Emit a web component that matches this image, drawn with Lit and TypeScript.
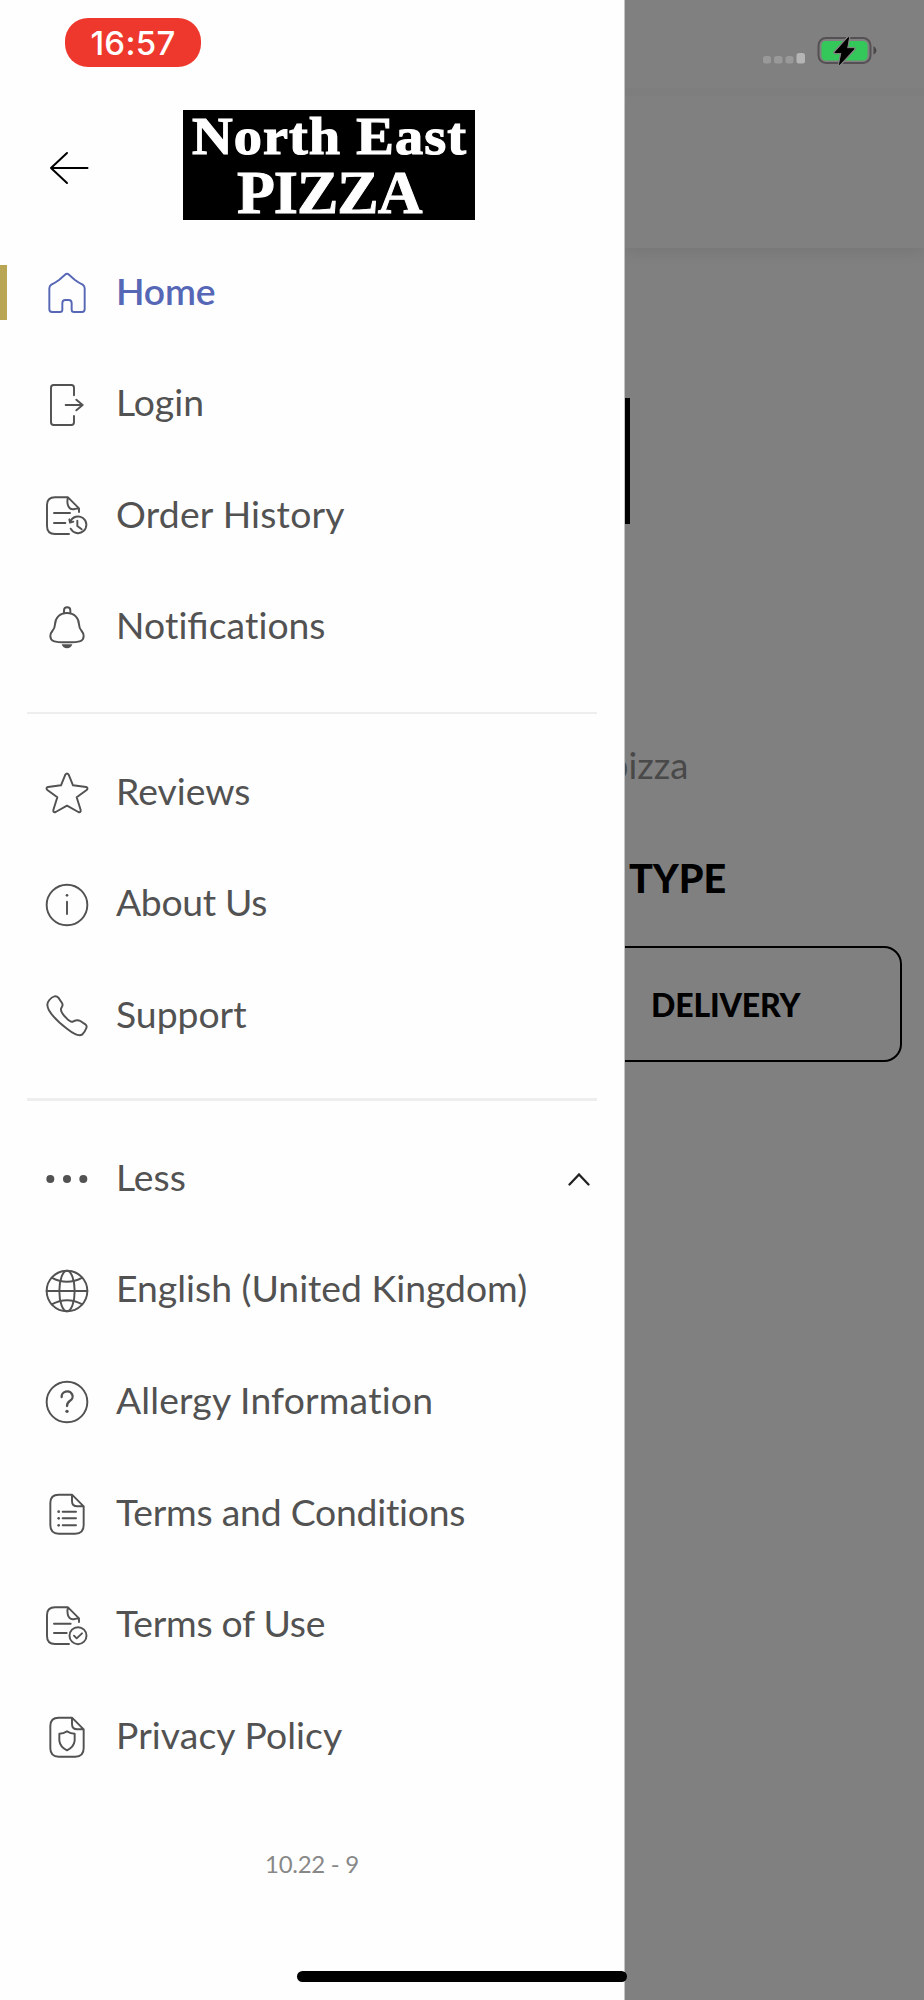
import { LitElement, html, css, svg, nothing } from "lit";
import { customElement, property } from "lit/decorators.js";

const foldedPage = svg`
  <path d="M78 5H38Q13 5 13 30V97Q13 122 38 122H88Q113 122 113 97V40L78 5V24Q78 40 94 40H113"/>`;
const cutPage = svg`
  <path d="M69 117H27Q3 117 3 93V30Q3 7 27 7H66L99 40V51M66 7C62 20 64 42 80 43C88 43 92 38 99 42"/>`;

const icons: Record<string, unknown> = {
  home: svg`<path d="M18 120H42Q49 120 49 113V94Q49 84 58 84H68Q77 84 77 94V113Q77 120 84 120H108Q116 120 116 112V49Q116 42 110 38Q98 32 86 23L69 8Q63 3 57 8L40 23Q28 32 16 38Q10 42 10 49V112Q10 120 18 120Z"/>`,
  login: svg`<path d="M84 34V11Q84 3 76 3H23Q15 3 15 11V115Q15 123 23 123H76Q84 123 84 115V96M59 63H110M91 47L110 63L91 79"/>`,
  history: svg`${cutPage}<path d="M24 54H72M24 84H58"/><path d="M73 80A25 25 0 1 1 74 101"/><path d="M70 73L72 83L82 80" /><path d="M94 77V93L107 103"/>`,
  bell: svg`<path d="M54 19V10Q54 1 63.500 1Q73 1 73 10V19"/><path d="M63 18C40 18 28 34 27 52C26 74 13 70 13 87C13 102 22 106 63 106C104 106 113 102 113 87C113 70 100 74 99 52C98 34 86 18 63 18Z"/><path class="solid" d="M47 112H79Q75 124 63 124Q51 124 47 112Z"/>`,
  star: svg`<path d="M58 8Q63 1 68 8L81 40L120 45Q128 48 122 54L92 76L104 114Q105 123 97 120L63 101L29 120Q21 123 22 114L34 76L4 54Q-2 48 6 45L45 40Z"/>`,
  info: svg`<circle cx="63" cy="63" r="61"/><path d="M63 53V90"/><circle class="solid" cx="63" cy="34" r="4"/>`,
  phone: svg`<path d="M25 4Q32 2 37 8L48 24Q52 30 47 37C40 46 50 58 60 68C68 77 76 83 82 79Q94 73 103 78L118 88Q124 93 121 99C118 108 115 113 108 119C98 125 82 116 64 102C40 84 18 62 8 44C2 30 3 24 10 15Q17 6 25 4Z"/>`,
  dots: svg`<g class="solid"><circle cx="13" cy="63" r="12"/><circle cx="63" cy="63" r="12"/><circle cx="112" cy="63" r="12"/></g>`,
  globe: svg`<circle cx="63" cy="63" r="61"/><ellipse cx="63" cy="63" rx="23" ry="61"/><path d="M2 63H124M17 23Q63 48 109 23M17 103Q63 78 109 103"/>`,
  help: svg`<circle cx="63" cy="63" r="61"/><path class="bold" d="M47 48A16.500 15 0 1 1 72 59Q63 65 63 75"/><circle class="solid" cx="63" cy="91" r="5"/>`,
  terms: svg`${foldedPage}<path d="M50 56H90M50 76H90M50 97H90"/><g class="solid"><circle cx="38" cy="56" r="4"/><circle cx="38" cy="76" r="4"/><circle cx="38" cy="97" r="4"/></g>`,
  usage: svg`${cutPage}<path d="M24 56H74M24 84H62"/><circle cx="96" cy="92" r="25.500"/><path d="M84 92L92 100L108 85"/>`,
  privacy: svg`${foldedPage}<path d="M63 46Q74 53 86 53V74Q84 93 63 103Q42 93 40 74V53Q52 53 63 46Z"/>`,
};

@customElement("menu-row")
class MenuRow extends LitElement {
  @property() icon = "";
  @property() label = "";
  @property({ type: Number }) tracking = 0;
  @property({ type: Boolean, reflect: true }) active = false;
  @property({ type: Boolean }) expanded = false;

  static styles = css`
    :host {
      display: grid;
      grid-template-columns: 46px 42px 1fr auto;
      align-items: center;
      height: 111.65px;
      color: #525252;
    }
    :host([active]) { color: #5667b6; }
    .marker { width: 7px; height: 55px; background: #b9a655; margin-top: -1px; }
    .icon {
      grid-column: 2;
      width: 42px;
      height: 42px;
      overflow: visible;
      fill: none;
      stroke: currentColor;
      stroke-width: 5.8;
      stroke-linecap: round;
      stroke-linejoin: round;
    }
    .solid { fill: currentColor; stroke: none; }
    .bold { stroke-width: 7; }
    .label {
      grid-column: 3;
      padding: 0 0 6px 28px;
      font: 400 37.3px/45px Lato, sans-serif;
      white-space: nowrap;
    }
    .plain { font-variant-ligatures: none; }
    :host([active]) .label { font-weight: 600; }
    .chevron { width: 22px; height: 13px; margin-right: 34px; fill: none; stroke: #222; stroke-width: 2.3; stroke-linecap: round; }
  `;

  render() {
    return html`
      ${this.active ? html`<span class="marker"></span>` : nothing}
      <svg class="icon" viewBox="0 0 126 126">${icons[this.icon]}</svg>
      <span class="label" style=${this.tracking ? `letter-spacing:${this.tracking}px` : nothing}>${this.label.split(/(t)(?=i)/).map((part) =>
        part === "t" ? html`<span class="plain">t</span>` : part)}</span>
      ${this.expanded
        ? html`<svg class="chevron" viewBox="0 0 22 13"><path d="M1.500 11.500L11 1.500L20.500 11.500"/></svg>`
        : nothing}
    `;
  }
}

type Item = [icon: string, label: string, tracking?: number];

const groups: Item[][] = [
  [["home", "Home", -0.2], ["login", "Login"], ["history", "Order History", 0.23], ["bell", "Notifications"]],
  [["star", "Reviews"], ["info", "About Us", -0.33], ["phone", "Support"]],
  [
    ["dots", "Less"], ["globe", "English (United Kingdom)"], ["help", "Allergy Information", 0.15],
    ["terms", "Terms and Conditions", -0.22], ["usage", "Terms of Use", -0.25], ["privacy", "Privacy Policy", 0.1],
  ],
];

@customElement("app-root")
class AppRoot extends LitElement {
  static styles = css`
    :host {
      display: grid;
      grid-template-columns: 625px 299px;
      height: 2000px;
      position: relative;
      overflow: hidden;
      background: #808080;
      font-family: Lato, sans-serif;
    }
    .drawer { background: #fefefe; border-right: 1px solid #c4c4c4; display: flex; flex-direction: column; }
    .status { height: 67px; padding: 18px 0 0 65px; box-sizing: border-box; }
    .time {
      display: flex;
      align-items: center;
      justify-content: center;
      width: 136px;
      height: 49px;
      border-radius: 23px;
      background: #ef382d;
      color: #fff;
      font: 500 33px/40px Inter, sans-serif;
      letter-spacing: 0.3px;
    }
    .head { display: flex; align-items: flex-start; height: 170.2px; padding: 43px 0 0 49px; box-sizing: border-box; }
    .back { width: 41px; height: 34px; margin: 41px 93px 0 0; fill: none; stroke: #000; stroke-width: 2; stroke-linecap: round; stroke-linejoin: round; }
    .logo { width: 292px; height: 110px; background: #000; }
    .logo text { font-family: "Liberation Serif", serif; font-weight: 700; fill: #fff; stroke: #fff; }
    .rule { border: 0; background: #eee; margin: 28.5px 27px 23px; height: 2px; }
    .rule.thick { height: 3px; margin: 25.7px 27px 22.5px; }
    .version { margin-top: 56px; text-align: center; color: #888; font-size: 24px; line-height: 30px; letter-spacing: -0.3px; }
    .page { display: flex; flex-direction: column; min-width: 0; overflow: hidden; }
    .bar { height: 248px; display: flex; box-sizing: border-box; padding: 36px 0 0 137px; background: linear-gradient(#0000 88px, #00000005 88px, #00000005 96px, #0000 97px); box-shadow: 0 4px 14px #00000016; }
    .system { width: 120px; height: 30px; }
    .banner { width: 5px; height: 126.5px; background: #000; margin-top: 149.5px; }
    .strap { margin: 220px 0 0 -17px; font-size: 36.5px; line-height: 42px; color: #494949; white-space: nowrap; }
    .title { margin: 67.5px 0 0 4px; font-size: 39.5px; line-height: 48px; font-weight: 900; color: #000; }
    .option {
      box-sizing: border-box;
      width: 301px;
      height: 116px;
      margin: 44.5px 0 0 -24px;
      border: 2px solid #000;
      border-radius: 18px;
      display: flex;
      align-items: center;
      padding-left: 48px;
      font-size: 32px;
      letter-spacing: -0.15px;
      font-weight: 900;
      color: #000;
    }
    .indicator { position: absolute; left: 297px; bottom: 18px; width: 330px; height: 11px; border-radius: 6px; background: #000; }
  `;

  render() {
    return html`
      <nav class="drawer">
        <div class="status"><span class="time">16:57</span></div>
        <div class="head">
          <svg class="back" viewBox="0 0 41 34"><path d="M2 17H38.500M18 2L2 17L18 32"/></svg>
          <svg class="logo" viewBox="0 0 292 110">
            <text x="9" y="44" font-size="53" stroke-width="1.2" letter-spacing="1" textLength="275" lengthAdjust="spacingAndGlyphs">North East</text>
            <text x="54" y="102.500" font-size="62" stroke-width="1" textLength="185.500">PIZZA</text>
          </svg>
        </div>
        ${groups.map((rows, g) => html`
          ${g ? html`<hr class="rule ${g === 2 ? "thick" : ""}" />` : nothing}
          ${rows.map(([icon, label, tracking = 0]) => html`
            <menu-row .icon=${icon} .label=${label} .tracking=${tracking} ?active=${icon === "home"} .expanded=${icon === "dots"}></menu-row>`)}
        `)}
        <div class="version">10.22 - 9</div>
      </nav>
      <main class="page">
        <div class="bar">
          <svg class="system" viewBox="0 0 120 30">
            <g fill="#999"><rect x="1" y="20" width="8" height="7.500" rx="2.500"/><rect x="12" y="20" width="8.500" height="7.500" rx="2.500"/><rect x="23.500" y="20" width="8" height="7.500" rx="2.500"/></g>
            <rect x="34.500" y="17" width="8.500" height="10.500" rx="2.500" fill="#b5b5b5"/>
            <rect x="56.500" y="2" width="52" height="25" rx="7.500" fill="none" stroke="#555053" stroke-width="2"/>
            <rect x="59.500" y="5" width="46" height="19.500" rx="4.500" fill="#34c759"/>
            <path d="M111.500 10Q114.500 12 114.500 14.500Q114.500 17 111.500 18.500Z" fill="#4b4749"/>
            <path d="M86.500 1.500L73 16.500H80L77.500 28.500L92 12.800H84.500Z" fill="#000" stroke="#808080" stroke-width="3.500" paint-order="stroke" stroke-linejoin="round"/>
            <path d="M86.500 1.500L73 16.500H80L77.500 28.500L92 12.800H84.500Z" fill="#000" stroke="#000" stroke-width="1" stroke-linejoin="round"/>
          </svg>
        </div>
        <div class="banner"></div>
        <div class="strap">pizza</div>
        <div class="title">TYPE</div>
        <div class="option">DELIVERY</div>
      </main>
      <div class="indicator"></div>
    `;
  }
}
